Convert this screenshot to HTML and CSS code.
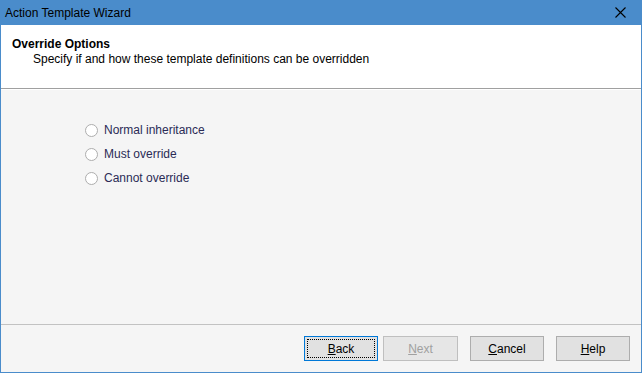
FILE: index.html
```html
<!DOCTYPE html>
<html lang="en">

<head>
    <meta charset="UTF-8">
    <title>Action Template Wizard</title>
    <link rel="stylesheet" href="styles.css">
</head>

<body>
    <div class="window">
        <div class="titlebar">
            <span class="title">Action Template Wizard</span>
            <button class="close">
                <svg width="11" height="11" viewBox="0 0 11 11">
                    <path d="M0.5 0.5 L10.5 10.5 M10.5 0.5 L0.5 10.5" stroke="#000" stroke-width="1.1" />
                </svg>
            </button>
        </div>
        <div class="header">
            <h2>Override Options</h2>
            <p>Specify if and how these template definitions can be overridden</p>
        </div>
        <div class="content">
            <label class="radio"><span class="circle"></span>Normal inheritance</label>
            <label class="radio"><span class="circle"></span>Must override</label>
            <label class="radio"><span class="circle"></span>Cannot override</label>
        </div>
        <div class="footer">
            <button class="btn focused"><span class="focus"><u>B</u>ack</span></button>
            <button class="btn" disabled><u>N</u>ext</button>
            <button class="btn gap"><u>C</u>ancel</button>
            <button class="btn gap"><u>H</u>elp</button>
        </div>
    </div>
</body>

</html>
```

FILE: styles.css
```css
* {
    box-sizing: border-box;
    font-family: "Liberation Sans", Arial, sans-serif;
}

body {
    margin: 0;
}

.window {
    width: 642px;
    height: 373px;
    display: flex;
    flex-direction: column;
    border: 1px solid #4a8ccb;
    border-top: 0;
    background: #f5f5f5;
}

.titlebar {
    height: 25px;
    margin: 0 -1px;
    background: #4a8ccb;
    display: flex;
    align-items: center;
    justify-content: space-between;
    padding-left: 5px;
}

.title {
    font-size: 12px;
    color: #000;
}

.close {
    width: 46px;
    height: 25px;
    border: 0;
    background: transparent;
    display: flex;
    align-items: center;
    justify-content: center;
    padding: 0 0 0 2px;
}

.header {
    height: 64px;
    background: #fff;
    border-bottom: 1px solid #a0a0a0;
    padding: 12px 11px 0;
}

.header h2 {
    margin: 0;
    font-size: 12px;
    font-weight: bold;
    color: #000;
}

.header p {
    margin: 1px 0 0 21px;
    font-size: 12px;
    color: #000;
}

.content {
    flex: 1;
    display: flex;
    flex-direction: column;
    gap: 10px;
    padding: 33px 0 0 84px;
    border-top: 1px solid #fff;
}

.radio {
    display: flex;
    align-items: center;
    gap: 6px;
    font-size: 12px;
    color: #2b2b55;
    height: 14px;
}

.circle {
    width: 13px;
    height: 13px;
    border: 1px solid #adadad;
    border-radius: 50%;
    background: #fff;
}

.footer {
    height: 48px;
    border-top: 1px solid #c2c2c2;
    display: flex;
    align-items: flex-start;
    padding: 11px 0 0 303px;
    gap: 5px;
}

.btn {
    width: 74px;
    height: 25px;
    background: #e1e1e1;
    border: 1px solid #adadad;
    font-size: 12px;
    color: #000;
    padding: 0;
    margin: 0;
}

.btn.gap {
    margin-left: 7px;
}

.btn:disabled {
    width: 75px;
    background: #e6e6e6;
    border-color: #bfbfbf;
    color: #a0a0a0;
}

.focused {
    border-color: #0078d7;
    padding: 2px;
}

.focus {
    display: flex;
    align-items: center;
    justify-content: center;
    height: 100%;
    border: 1px dotted #000;
}
```
